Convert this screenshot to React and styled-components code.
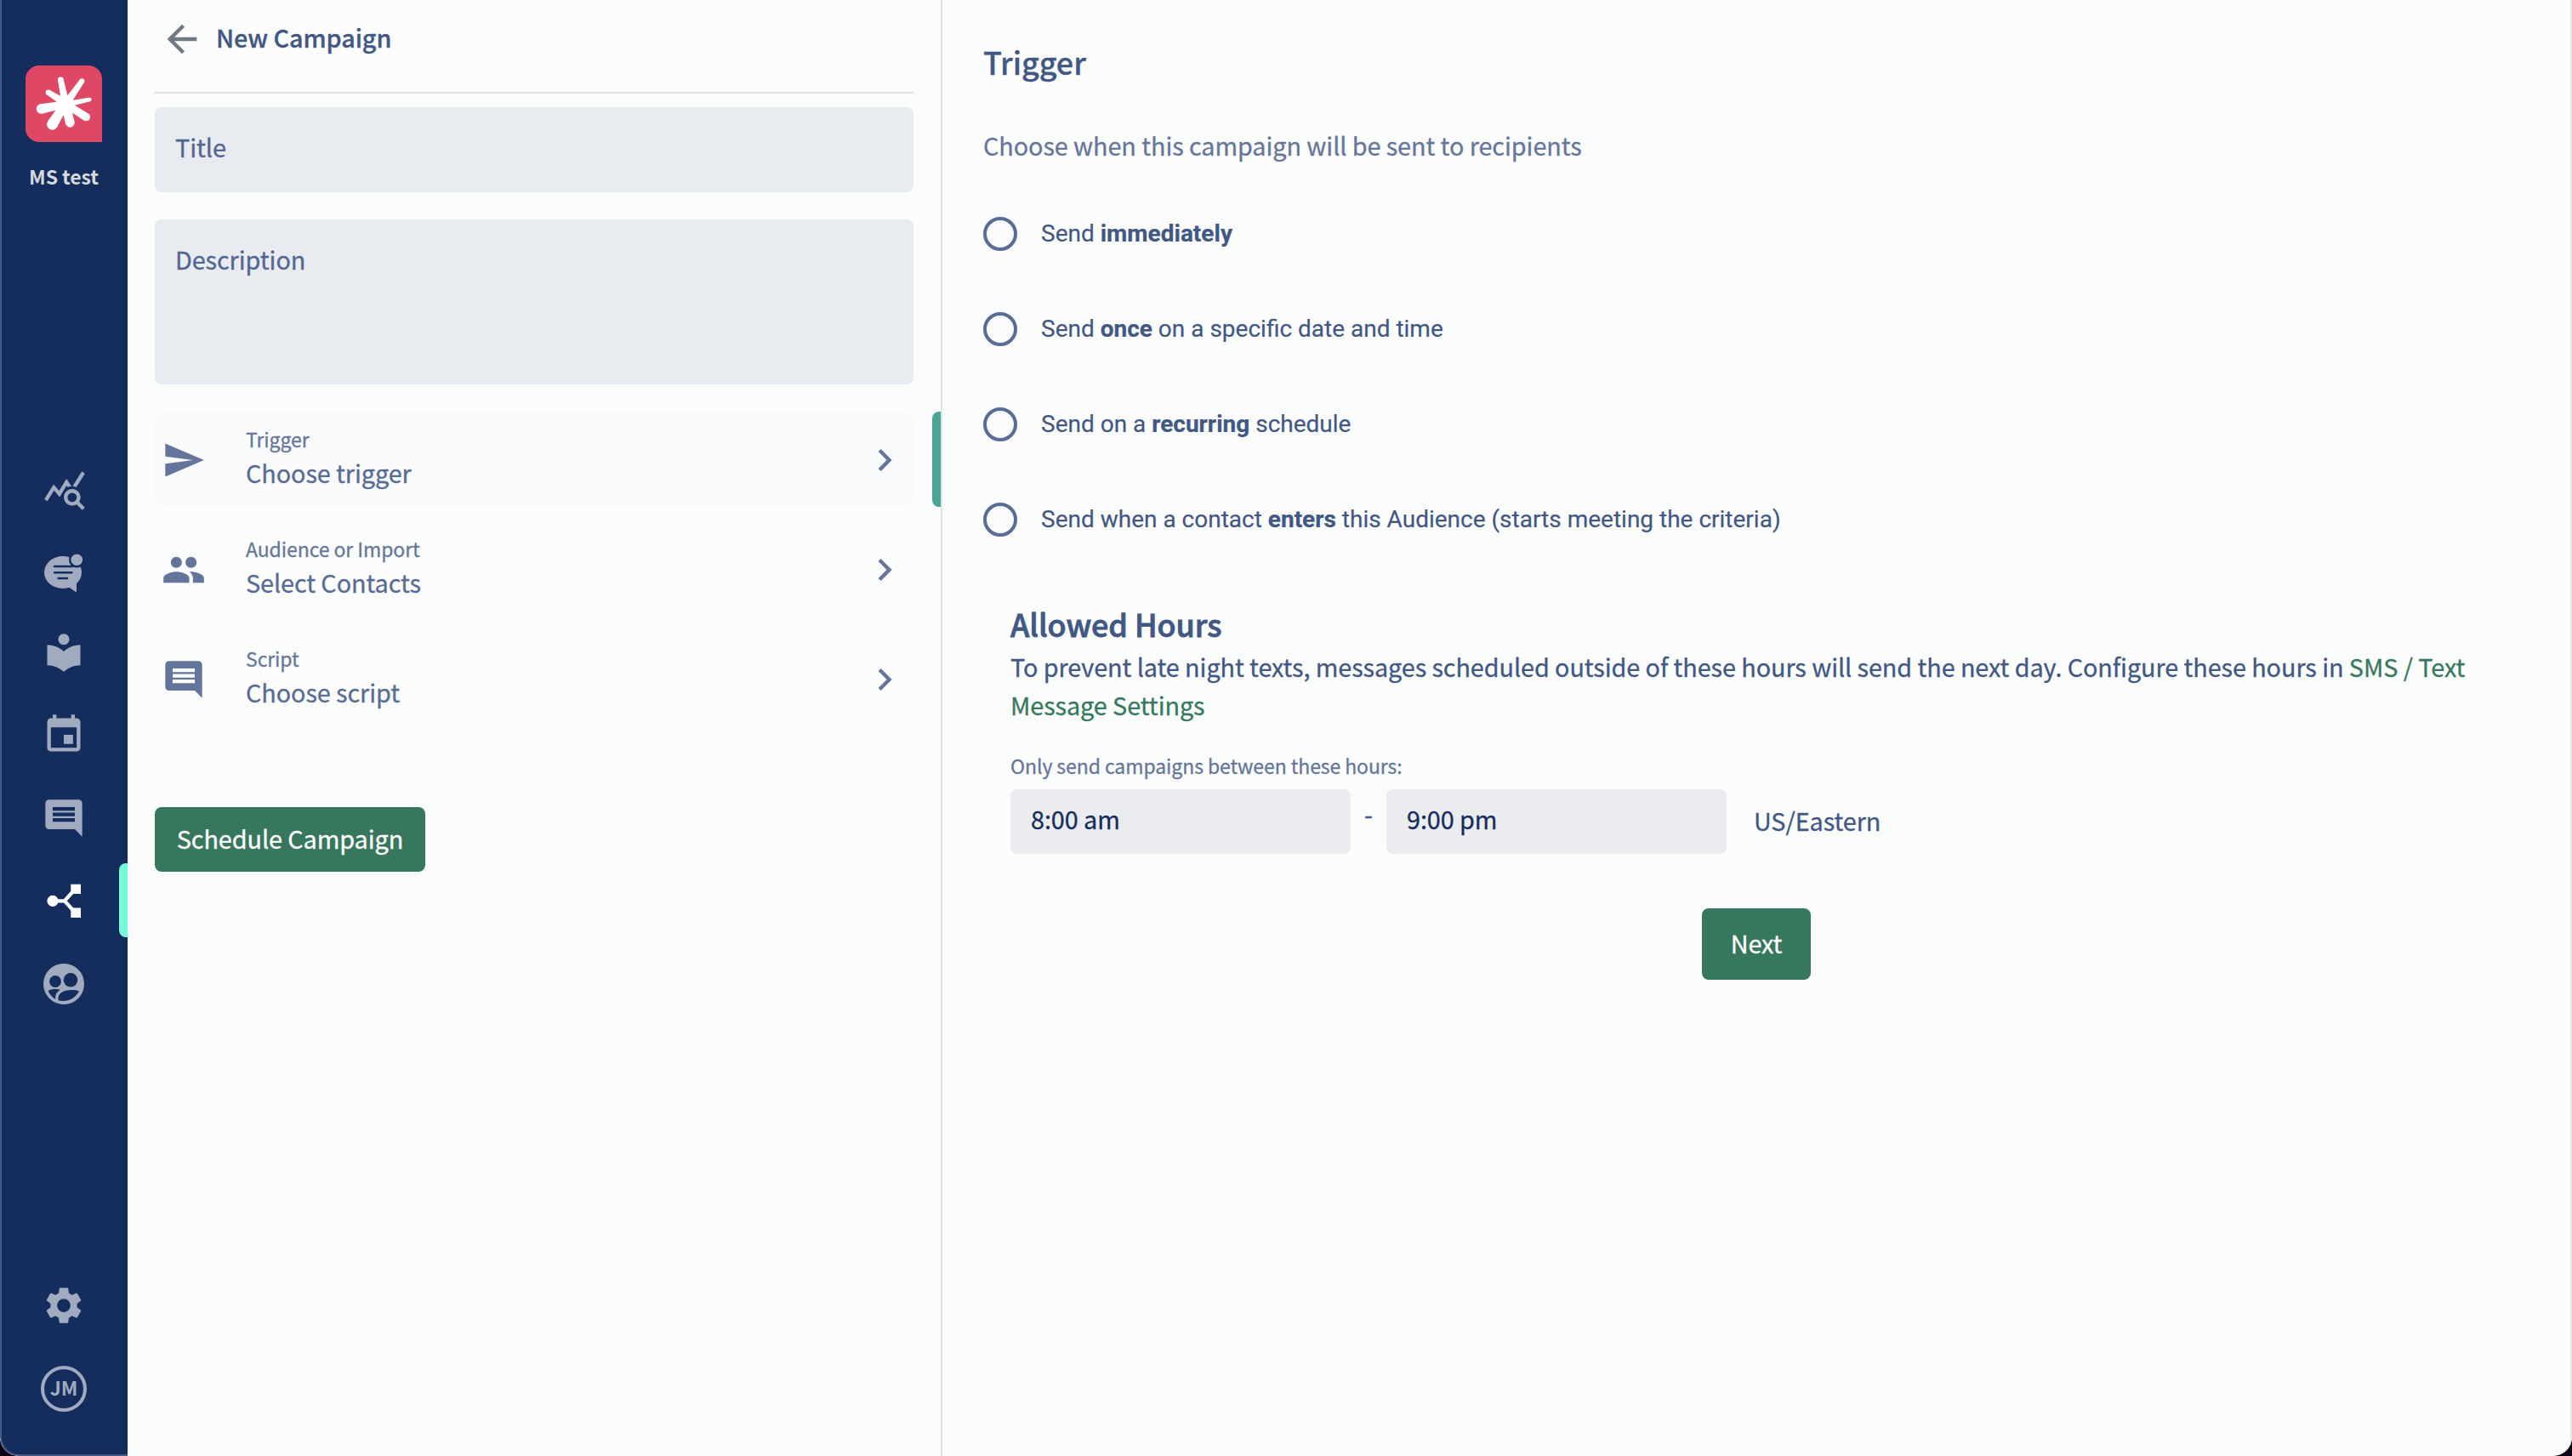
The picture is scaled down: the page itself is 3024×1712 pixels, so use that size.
import React from "react";
import styled, { createGlobalStyle, css } from "styled-components";
import {
  MdArrowBack,
  MdChevronRight,
  MdComment,
  MdEvent,
  MdLocalLibrary,
  MdPeople,
  MdQueryStats,
  MdSend,
  MdSettings,
} from "react-icons/md";

const navy = "#152d5c";
const green = "#37775d";

const GlobalStyle = createGlobalStyle`
  *, *::before, *::after { box-sizing: border-box; }
  body {
    margin: 0;
    background: #0b0016;
    font-family: "Noto Sans CJK JP", "Noto Sans", sans-serif;
    font-size: 28.8px;
    line-height: 40px;
    letter-spacing: -0.08px;
    -webkit-text-stroke: 0.3px;
    color: #425784;
  }
  h1, h2, h3, p { margin: 0; }
  button, input, textarea { font: inherit; letter-spacing: inherit; border: 0; }
  svg { display: block; flex: none; }
`;

const Shell = styled.div`
  display: flex;
  width: 100vw;
  height: 100vh;
  overflow: hidden;
  background: #fbfdfc;
  border-radius: 0 0 22px 22px;
`;

/* Sidebar */

const Sidebar = styled.aside`
  display: flex;
  flex-direction: column;
  flex: none;
  width: 150px;
  padding: 77px 0 50px;
  background: ${navy};
  border-left: 2px solid #475a83;
  border-bottom: 2px solid #475a83;
  border-radius: 0 0 0 22px;
`;

const Logo = styled.svg`
  width: 90px;
  height: 90px;
  margin-left: 28px;
  background: #df4865;
  border-radius: 16px 16px 0 16px;
`;

const OrgName = styled.div`
  margin: 25px 2px 0 0;
  font-size: 23px;
  font-weight: 700;
  line-height: 30px;
  text-align: center;
  color: #d3d9dc;
  -webkit-text-stroke: 0;
`;

const Nav = styled.nav`
  display: flex;
  flex-direction: column;
  margin-top: 328px;
`;

const NavItem = styled.a`
  position: relative;
  padding-left: ${(p) => p.$indent || 47}px;
  margin-bottom: ${(p) => p.$gap || 0}px;
  color: ${(p) => (p.$active ? "#fff" : "#a1abc0")};

  ${(p) =>
    p.$active &&
    css`
      &::after {
        content: "";
        position: absolute;
        top: -18px;
        right: 0;
        width: 10px;
        height: 87px;
        background: #75fbda;
        border-radius: 8px 0 0 8px;
      }
    `}
`;

const SidebarFooter = styled.div`
  display: flex;
  flex-direction: column;
  gap: 45px;
  margin-top: auto;
`;

const Avatar = styled.div`
  width: 54px;
  height: 54px;
  margin-left: 46px;
  border: 4px solid #a1abc0;
  border-radius: 50%;
  font-size: 23px;
  font-weight: 700;
  line-height: 43px;
  text-align: center;
  color: #a1abc0;
  -webkit-text-stroke: 0;
`;

/* Campaign panel */

const Panel = styled.section`
  flex: none;
  width: 958px;
  padding: 0 32px;
  border-right: 2px solid #dfe1e8;
`;

const PanelHeader = styled.header`
  display: flex;
  align-items: flex-start;
  gap: 14px;
  height: 110px;
  padding: 20px 0 0 6px;
  border-bottom: 2px solid #dfe1e8;
  color: #707982;
`;

const PanelTitle = styled.h1`
  padding-top: 4px;
  font-size: 28.8px;
  font-weight: 500;
  color: #425784;
`;

const fieldStyles = css`
  display: block;
  width: 100%;
  background: #e8ebf0;
  border-radius: 8px;
  color: #53668f;
  outline: 0;
  &::placeholder {
    color: #53668f;
    opacity: 1;
  }
`;

const TitleInput = styled.input`
  ${fieldStyles}
  height: 100px;
  margin-top: 16px;
  padding: 25px 24px 33px;
`;

const DescriptionInput = styled.textarea`
  ${fieldStyles}
  height: 194px;
  margin-top: 32px;
  padding: 27px 24px;
  resize: none;
`;

const StepList = styled.div`
  display: flex;
  flex-direction: column;
  gap: 17px;
  margin-top: 32px;
`;

const Step = styled.a`
  position: relative;
  display: flex;
  align-items: center;
  height: 112px;
  padding: 1px 8px 0;
  border-radius: 8px;
  background: ${(p) => (p.$active ? "#f9fafc" : "transparent")};
  color: #64759b;

  ${(p) =>
    p.$active &&
    css`
      &::after {
        content: "";
        position: absolute;
        top: 0;
        right: -32px;
        width: 10px;
        height: 100%;
        background: #4aa597;
        border-radius: 8px 0 0 8px;
      }
    `}
`;

const StepText = styled.div`
  flex: 1;
  align-self: flex-start;
  margin: 11px 0 0 47px;
`;

const StepLabel = styled.div`
  font-size: 23px;
  line-height: 40px;
  color: #66769a;
`;

const StepValue = styled.div`
  line-height: 39px;
  color: #586b95;
`;

const Button = styled.button`
  display: block;
  width: ${(p) => p.$width}px;
  height: ${(p) => p.$height}px;
  padding: 0 0 3px;
  background: ${green};
  border-radius: 8px;
  color: #fff;
`;

const ScheduleRow = styled.div`
  margin-top: 95px;
`;

/* Trigger settings */

const Main = styled.main`
  flex: 1;
  min-width: 0;
  padding: 46px 48px 0;
  border-right: 2px solid #e4e6ec;
`;

const Heading = styled.h2`
  font-size: 36px;
  font-weight: 500;
  line-height: 52px;
  color: #425784;
`;

const Intro = styled.p`
  margin-top: 53px;
  color: #66769a;
`;

const Options = styled.div`
  display: flex;
  flex-direction: column;
  margin-top: 28px;
`;

const Option = styled.label`
  display: flex;
  align-items: center;
  gap: 28px;
  height: 112px;
  font: 400 28px/40px Roboto, sans-serif;
  letter-spacing: 0;
  -webkit-text-stroke: 0.2px;
`;

const Radio = styled.span`
  width: 40px;
  height: 40px;
  border: 4px solid #586c95;
  border-radius: 50%;
`;

const AllowedHours = styled.section`
  margin-top: 40px;
  padding: 0 32px;
`;

const AllowedTitle = styled(Heading)`
  -webkit-text-stroke: 0.8px;
`;

const Note = styled.p`
  margin-top: 2px;
  line-height: 45px;
`;

const Link = styled.a`
  color: #37795e;
`;

const HoursLabel = styled.div`
  margin-top: 31px;
  font-size: 23px;
  line-height: 36px;
  color: #66769a;
`;

const HoursRow = styled.div`
  display: flex;
  margin-top: 10px;
`;

const TimeInput = styled.input`
  width: 400px;
  height: 76px;
  padding: 14px 24px 22px;
  background: #ebecf0;
  border-radius: 8px;
  color: ${navy};
  outline: 0;
`;

const Dash = styled.span`
  width: 42px;
  padding-top: 9px;
  text-align: center;
`;

const Zone = styled.span`
  margin: 17px 0 0 32px;
`;

const NextRow = styled.div`
  display: flex;
  justify-content: center;
  margin-top: 64px;
`;

function ChatIcon() {
  return (
    <svg width="52" height="52" viewBox="0 0 52 52" fill="currentColor">
      <ellipse cx="25" cy="25" rx="22" ry="19" />
      <path d="M31 41.5 39.500 47.800Q41 48.800 41 47V34Z" />
      <g stroke={navy} strokeWidth="2.4" strokeLinecap="round">
        <path d="M15 18h21M15 25.300h20.500M19.500 32h10.500" />
      </g>
      <circle cx="41.300" cy="10.300" r="9.300" fill={navy} />
      <circle cx="41.300" cy="10.300" r="6.800" />
    </svg>
  );
}

function BranchIcon() {
  return (
    <svg width="52" height="52" viewBox="0 0 52 52" fill="currentColor">
      <circle cx="13" cy="26.300" r="6.600" />
      <path d="M34.300 6.700H46V18H34.300zM34.300 34.600H46V46H34.300z" />
      <path
        d="M13 26.300H27.500M38 14 27.500 25.500V27L38 38.500"
        fill="none"
        stroke="currentColor"
        strokeWidth="4.200"
      />
    </svg>
  );
}

function GroupIcon() {
  return (
    <svg width="52" height="52" viewBox="0 0 52 52" fill="currentColor">
      <circle cx="26" cy="26" r="24" />
      <g fill={navy}>
        <circle cx="16" cy="23" r="6.900" />
        <circle cx="34" cy="21.300" r="8.300" />
        <path d="M7.600 33.900C11.500 31.800 18 31.600 22 32.800C17.500 35.500 15.600 39 16.300 43.900C12.300 41.500 9.200 38.200 7.600 33.900Z" />
        <path d="M44 34.500C38 32 27.500 32.800 23 36.200C19.800 38.500 19 41.500 19.700 45.300C29.500 47.800 39.500 43.500 44 34.500Z" />
      </g>
    </svg>
  );
}

function BrandLogo() {
  return (
    <Logo viewBox="90 112 270 270" fill="#fff">
      <path d="M238 218 281 162 297 171 257 234 314 225.500 318 239 264 252 312 282 297 306 255 279 263 311 231 318 224 287 201 330 168 309 196 270 147 282 143 248 200 240 165 215 176 199 213 219 204 163 224 161Z" />
      <circle cx="214" cy="162.500" r="10" />
      <circle cx="289" cy="167" r="9" />
      <circle cx="316" cy="232" r="7" />
      <circle cx="304" cy="294" r="14" />
      <circle cx="247" cy="314" r="16" />
      <circle cx="184.500" cy="320" r="19" />
      <circle cx="145" cy="265" r="17" />
      <circle cx="170.500" cy="207" r="9.500" />
    </Logo>
  );
}

const steps = [
  { label: "Trigger", value: "Choose trigger", icon: MdSend, active: true },
  { label: "Audience or Import", value: "Select Contacts", icon: MdPeople },
  { label: "Script", value: "Choose script", icon: MdComment },
];

export default function App() {
  return (
    <>
      <GlobalStyle />
      <Shell>
        <Sidebar>
          <BrandLogo />
          <OrgName>MS test</OrgName>
          <Nav>
            <NavItem $indent={48} $gap={46}><MdQueryStats size={52} /></NavItem>
            <NavItem $gap={41}><ChatIcon /></NavItem>
            <NavItem $gap={45}><MdLocalLibrary size={52} /></NavItem>
            <NavItem $gap={46}><MdEvent size={52} /></NavItem>
            <NavItem $gap={45}><MdComment size={52} /></NavItem>
            <NavItem $active $gap={46}><BranchIcon /></NavItem>
            <NavItem><GroupIcon /></NavItem>
          </Nav>
          <SidebarFooter>
            <NavItem><MdSettings size={52} /></NavItem>
            <Avatar>JM</Avatar>
          </SidebarFooter>
        </Sidebar>

        <Panel>
          <PanelHeader>
            <MdArrowBack size={52} />
            <PanelTitle>New Campaign</PanelTitle>
          </PanelHeader>
          <TitleInput placeholder="Title" />
          <DescriptionInput placeholder="Description" />
          <StepList>
            {steps.map(({ label, value, icon: Icon, active }) => (
              <Step key={label} $active={active}>
                <Icon size={52} />
                <StepText>
                  <StepLabel>{label}</StepLabel>
                  <StepValue>{value}</StepValue>
                </StepText>
                <MdChevronRight size={52} />
              </Step>
            ))}
          </StepList>
          <ScheduleRow>
            <Button $width={318} $height={76}>Schedule Campaign</Button>
          </ScheduleRow>
        </Panel>

        <Main>
          <Heading>Trigger</Heading>
          <Intro>Choose when this campaign will be sent to recipients</Intro>
          <Options>
            <Option><Radio /><span>Send <b>immediately</b></span></Option>
            <Option><Radio /><span>Send <b>once</b> on a specific date and time</span></Option>
            <Option><Radio /><span>Send on a <b>recurring</b> schedule</span></Option>
            <Option>
              <Radio />
              <span>Send when a contact <b>enters</b> this Audience (starts meeting the criteria)</span>
            </Option>
          </Options>
          <AllowedHours>
            <AllowedTitle as="h3">Allowed Hours</AllowedTitle>
            <Note>
              To prevent late night texts, messages scheduled outside of these hours will send
              the next day. Configure these hours in <Link>SMS / Text Message Settings</Link>
            </Note>
            <HoursLabel>Only send campaigns between these hours:</HoursLabel>
            <HoursRow>
              <TimeInput defaultValue="8:00 am" />
              <Dash>-</Dash>
              <TimeInput defaultValue="9:00 pm" />
              <Zone>US/Eastern</Zone>
            </HoursRow>
          </AllowedHours>
          <NextRow>
            <Button $width={128} $height={84}>Next</Button>
          </NextRow>
        </Main>
      </Shell>
    </>
  );
}
